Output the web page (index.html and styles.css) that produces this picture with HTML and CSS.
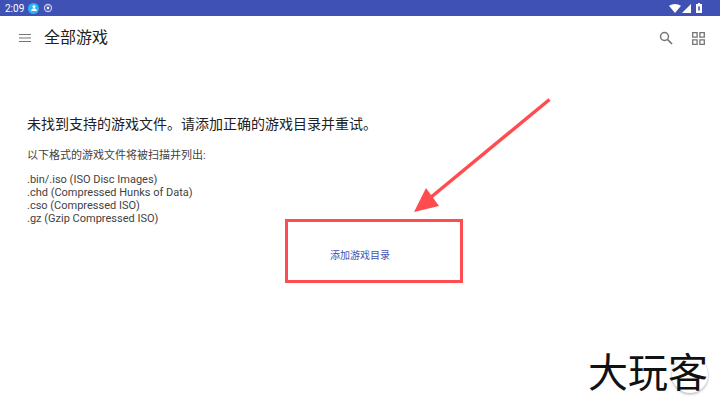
FILE: index.html

```html
<!DOCTYPE html>
<html lang="zh-CN">
<head>
    <meta charset="UTF-8">
    <meta name="viewport" content="width=device-width, initial-scale=1.0">
    <title>全部游戏</title>
    <link rel="stylesheet" href="styles.css">
</head>
<body>

    <div class="status-bar">
        <span class="clock">2:09</span>
        <span class="notify-badge">
            <svg width="10" height="10" viewBox="0 0 10 10"><circle cx="5" cy="3.400" r="1.500" fill="#fff"/><path d="M2.200 8c0-1.900 1.300-2.800 2.800-2.800S7.800 6.100 7.800 8Z" fill="#fff"/></svg>
        </span>
        <svg class="notify-eye" width="10" height="10" viewBox="0 0 10 10"><circle cx="5" cy="5" r="3.500" fill="none" stroke="#c5cae9" stroke-width="1.300"/><circle cx="5" cy="5" r="1.400" fill="#e8eaf6"/></svg>
        <div class="status-right">
            <svg class="wifi" width="12" height="9" viewBox="0 0 12 9"><path d="M0 1.800Q6-1.600 12 1.800L6 9Z" fill="#fff"/></svg>
            <svg class="signal" width="9" height="9" viewBox="0 0 9 9"><path d="M0 9 9 0V9Z" fill="#fff"/></svg>
            <svg width="6" height="10" viewBox="0 0 6 10"><path d="M2 0h2v1h2v9H0V1h2Z" fill="#fff"/><path d="M2.200 3.500v4h1.600v-4Z" fill="#3f51b5"/></svg>
        </div>
    </div>

    <div class="toolbar">
        <svg class="menu-icon" width="14" height="10" viewBox="0 0 14 10"><path d="M1 1.500h12M1 5h12M1 8.500h12" stroke="#757575" stroke-width="1.200"/></svg>
        <span class="toolbar-title">全部游戏</span>
        <svg class="search-icon" width="14" height="14" viewBox="0 0 14 14"><circle cx="5.500" cy="5.500" r="4" fill="none" stroke="#757575" stroke-width="1.500"/><path d="M8.500 8.500 13 13" stroke="#757575" stroke-width="1.700"/></svg>
        <svg class="grid-icon" width="13" height="13" viewBox="0 0 13 13"><path d="M.7.7h4.400v4.400H.7ZM7.900.7h4.400v4.400H7.900ZM.7 7.900h4.400v4.400H.7ZM7.900 7.900h4.400v4.400H7.900Z" fill="none" stroke="#757575" stroke-width="1.300"/></svg>
    </div>

    <div class="content">
        <p class="empty-title">未找到支持的游戏文件。请添加正确的游戏目录并重试。</p>
        <p class="formats-intro">以下格式的游戏文件将被扫描并列出:</p>
        <ul class="formats">
            <li>.bin/.iso (ISO Disc Images)</li>
            <li>.chd (Compressed Hunks of Data)</li>
            <li>.cso (Compressed ISO)</li>
            <li>.gz (Gzip Compressed ISO)</li>
        </ul>
        <div class="add-row">
            <button type="button" class="add-btn">添加游戏目录</button>
        </div>
    </div>

    <!-- annotation drawn over the screenshot -->
    <svg class="arrow" width="160" height="130" viewBox="0 0 160 130">
        <path d="M149.500 9.500 30 108" stroke="#ff4d4f" stroke-width="3.500" fill="none"/>
        <path d="M14 122 26 98 39 116Z" fill="#ff4d4f"/>
    </svg>

    <div class="fab"></div>
    <div class="watermark">大玩客</div>

</body>
</html>
```

FILE: styles.css

```css
body {
    margin: 0;
    width: 720px;
    height: 405px;
    overflow: hidden;
    position: relative;
    background: #fff;
    font-family: 'Roboto', 'Noto Sans CJK SC', sans-serif;
    color: #212121;
}

.status-bar {
    height: 16px;
    background: #3f51b5;
    display: flex;
    align-items: center;
    padding: 0 18px 0 5px;
    color: #fff;
}

.clock {
    font-size: 10px;
    margin-right: 4px;
}

.notify-badge {
    width: 11px;
    height: 11px;
    border-radius: 50%;
    background: #29b6f6;
    display: flex;
    align-items: center;
    justify-content: center;
    margin-right: 4px;
}

.notify-eye {
    margin-right: auto;
}

.status-right {
    display: flex;
    align-items: center;
}

.wifi {
    margin-right: 1px;
}

.signal {
    margin-right: 5px;
}

.toolbar {
    height: 44px;
    display: flex;
    align-items: center;
    padding: 0 15px 0 18px;
}

.menu-icon {
    margin-right: 12px;
}

.toolbar-title {
    font-size: 16px;
    line-height: 22px;
    flex: 1;
}

.search-icon {
    margin-right: 19px;
}

.content {
    padding: 55px 27px 0;
}

.empty-title {
    margin: 0 0 16px;
    font-size: 14px;
    line-height: 18px;
}

.formats-intro {
    margin: 0 0 11px;
    font-size: 11px;
    line-height: 13px;
    color: #424242;
}

.formats {
    list-style: none;
    margin: 0;
    padding: 0;
    font-size: 11px;
    line-height: 13px;
    color: #424242;
}

.add-row {
    display: flex;
    margin: -6px 0 0 258px;
}

.add-btn {
    width: 178px;
    height: 64px;
    box-sizing: border-box;
    background: #fff;
    border: 3px solid #ff4d4f;
    color: #3f51b5;
    font-family: inherit;
    font-size: 10px;
    text-align: left;
    padding: 6px 0 0 42px;
}

.arrow {
    position: absolute;
    left: 400px;
    top: 90px;
}

.fab {
    position: absolute;
    left: 672px;
    top: 357px;
    width: 36px;
    height: 36px;
    border-radius: 50%;
    background: #fff;
    box-shadow: 0 1px 3px rgba(0, 0, 0, 0.35);
}

.watermark {
    position: absolute;
    left: 588px;
    top: 352px;
    font-size: 40px;
    line-height: 44px;
    color: #111;
    font-weight: 400;
}
```
